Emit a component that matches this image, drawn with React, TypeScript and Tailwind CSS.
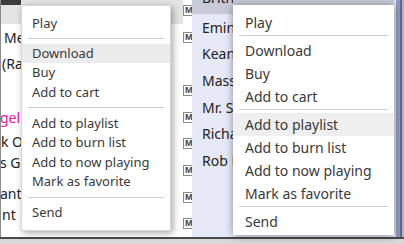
import React from "react";

const font = { fontFamily: '"Segoe UI", "Noto Sans", "Open Sans", sans-serif' };

function LeftMenu() {
  const Item = ({ t, hi }: { t: string; hi?: boolean }) => (
    <div className={`h-[19.5px] leading-[19.5px] pl-[10px] text-[13px] text-[#3a3a3a] ${hi ? "bg-[#ececec]" : ""}`}>{t}</div>
  );
  return (
    <div className="absolute left-[21px] top-[5px] w-[150px] h-[226px] bg-white border border-[#d6d6d6] shadow-[2px_2px_7px_rgba(0,0,0,0.35)] pt-[8px]" style={font}>
      <Item t="Play" />
      <div className="h-[10px] pt-[4px] px-[6px]"><div className="h-px bg-[#cfcfcf]" /></div>
      <Item t="Download" hi />
      <Item t="Buy" />
      <Item t="Add to cart" />
      <div className="h-[11.5px] pt-[4.5px] px-[6px]"><div className="h-px bg-[#cfcfcf]" /></div>
      <Item t="Add to playlist" />
      <Item t="Add to burn list" />
      <Item t="Add to now playing" />
      <Item t="Mark as favorite" />
      <div className="h-[11.5px] pt-[5px] px-[6px]"><div className="h-px bg-[#cfcfcf]" /></div>
      <Item t="Send" />
    </div>
  );
}

function RightMenu() {
  const Item = ({ t, hi }: { t: string; hi?: boolean }) => (
    <div className={`h-[23px] leading-[23px] pl-[12px] text-[14px] text-[#3a3a3a] ${hi ? "bg-[#efefef]" : ""}`}>{t}</div>
  );
  const S = () => <div className="h-[5px] pt-px px-[6px]"><div className="h-px bg-[#d0d0d0]" /></div>;
  return (
    <div className="absolute left-[233px] top-[5px] w-[161px] h-[230px] bg-white shadow-[0_1px_8px_rgba(0,0,0,0.4)] pt-[6px]" style={font}>
      <Item t="Play" />
      <S />
      <Item t="Download" />
      <Item t="Buy" />
      <Item t="Add to cart" />
      <S />
      <Item t="Add to playlist" hi />
      <Item t="Add to burn list" />
      <Item t="Add to now playing" />
      <Item t="Mark as favorite" />
      <S />
      <Item t="Send" />
    </div>
  );
}

function MBox() {
  return (
    <div className="h-[27px] flex items-center">
      <div className="w-[12px] h-[11px] shrink-0 border border-[#8a8a8a] bg-white text-[9px] leading-[9px] font-bold text-[#444] pl-px" style={{ fontFamily: '"Liberation Sans", sans-serif' }}>M</div>
    </div>
  );
}

export default function App() {
  const leftRows: { h: number; t?: string; ml?: number; pink?: boolean }[] = [
    { h: 26, t: "Me", ml: 3 },
    { h: 27, t: "(Ra", ml: 1 },
    { h: 27 },
    { h: 27, t: "gel", ml: -1, pink: true },
    { h: 21, t: "k O", ml: 0 },
    { h: 20, t: "s Go", ml: -1 },
    { h: 10 },
    { h: 22, t: "ant", ml: -1 },
    { h: 20, t: "nt", ml: 1 },
  ];
  const rightRows = ["Eminem", "Keane", "Massive Attack", "Mr. Scruff", "Richard Ashcroft", "Rob Dougan"];
  return (
    <div className="relative w-[404px] h-[244px] overflow-hidden bg-[#d9d9d9]" style={font}>
      <div className="flex h-[239px] border-b-2 border-[#4a4a4a]">
        {/* left pane */}
        <div className="w-[192px] h-full flex bg-white border-l border-[#8c8c8c]">
          <div className="w-[182px] flex flex-col">
            <div className="h-[24px] shrink-0 bg-[#e4e4e4] flex flex-col">
              <div className="w-[20px] h-[5px] bg-[#3c3c3c]" />
            </div>
            {leftRows.map((r, i) => (
              <div key={i} className="shrink-0 w-[20px] overflow-hidden flex items-center whitespace-nowrap text-[14px] text-[#222]" style={{ height: r.h }}>
                {r.t && (
                  <span className={r.pink ? "text-[#e0169a]" : ""} style={{ marginLeft: r.ml }}>{r.t}</span>
                )}
              </div>
            ))}
          </div>
          <div className="w-[9px] overflow-hidden flex flex-col -mt-[2.5px]">
            <MBox />
            <MBox />
            <div className="h-[27px]" />
            <MBox />
            <MBox />
            <MBox />
            <MBox />
            <MBox />
            <MBox />
          </div>
        </div>
        {/* right pane */}
        <div className="flex-1 h-full flex bg-[#e6e9f7]">
          <div className="flex-1 flex flex-col">
            <div className="h-[14px] shrink-0 bg-[#c7cbd8] flex items-start">
              <div className="w-[41px] h-[14px] overflow-hidden pl-[10px] text-[14px] leading-[16px] text-[#222] whitespace-nowrap">
                <div className="-mt-[10px]">Britney Spears</div>
              </div>
            </div>
            {rightRows.map((t, i) => (
              <div key={i} className="shrink-0 h-[26.6px] w-[41px] overflow-hidden flex items-center pl-[10px] whitespace-nowrap text-[14px] text-[#222]">
                {t}
              </div>
            ))}
          </div>
          <div className="w-[10px] h-full flex">
            <div className="w-[2px] bg-[#dfe3ef]" />
            <div className="w-[4px] bg-[#8e9bc0]" />
            <div className="w-[2px] bg-[#5d6890]" />
            <div className="w-[2px] bg-[#a9b3d0]" />
          </div>
        </div>
      </div>
      <LeftMenu />
      <RightMenu />
    </div>
  );
}
